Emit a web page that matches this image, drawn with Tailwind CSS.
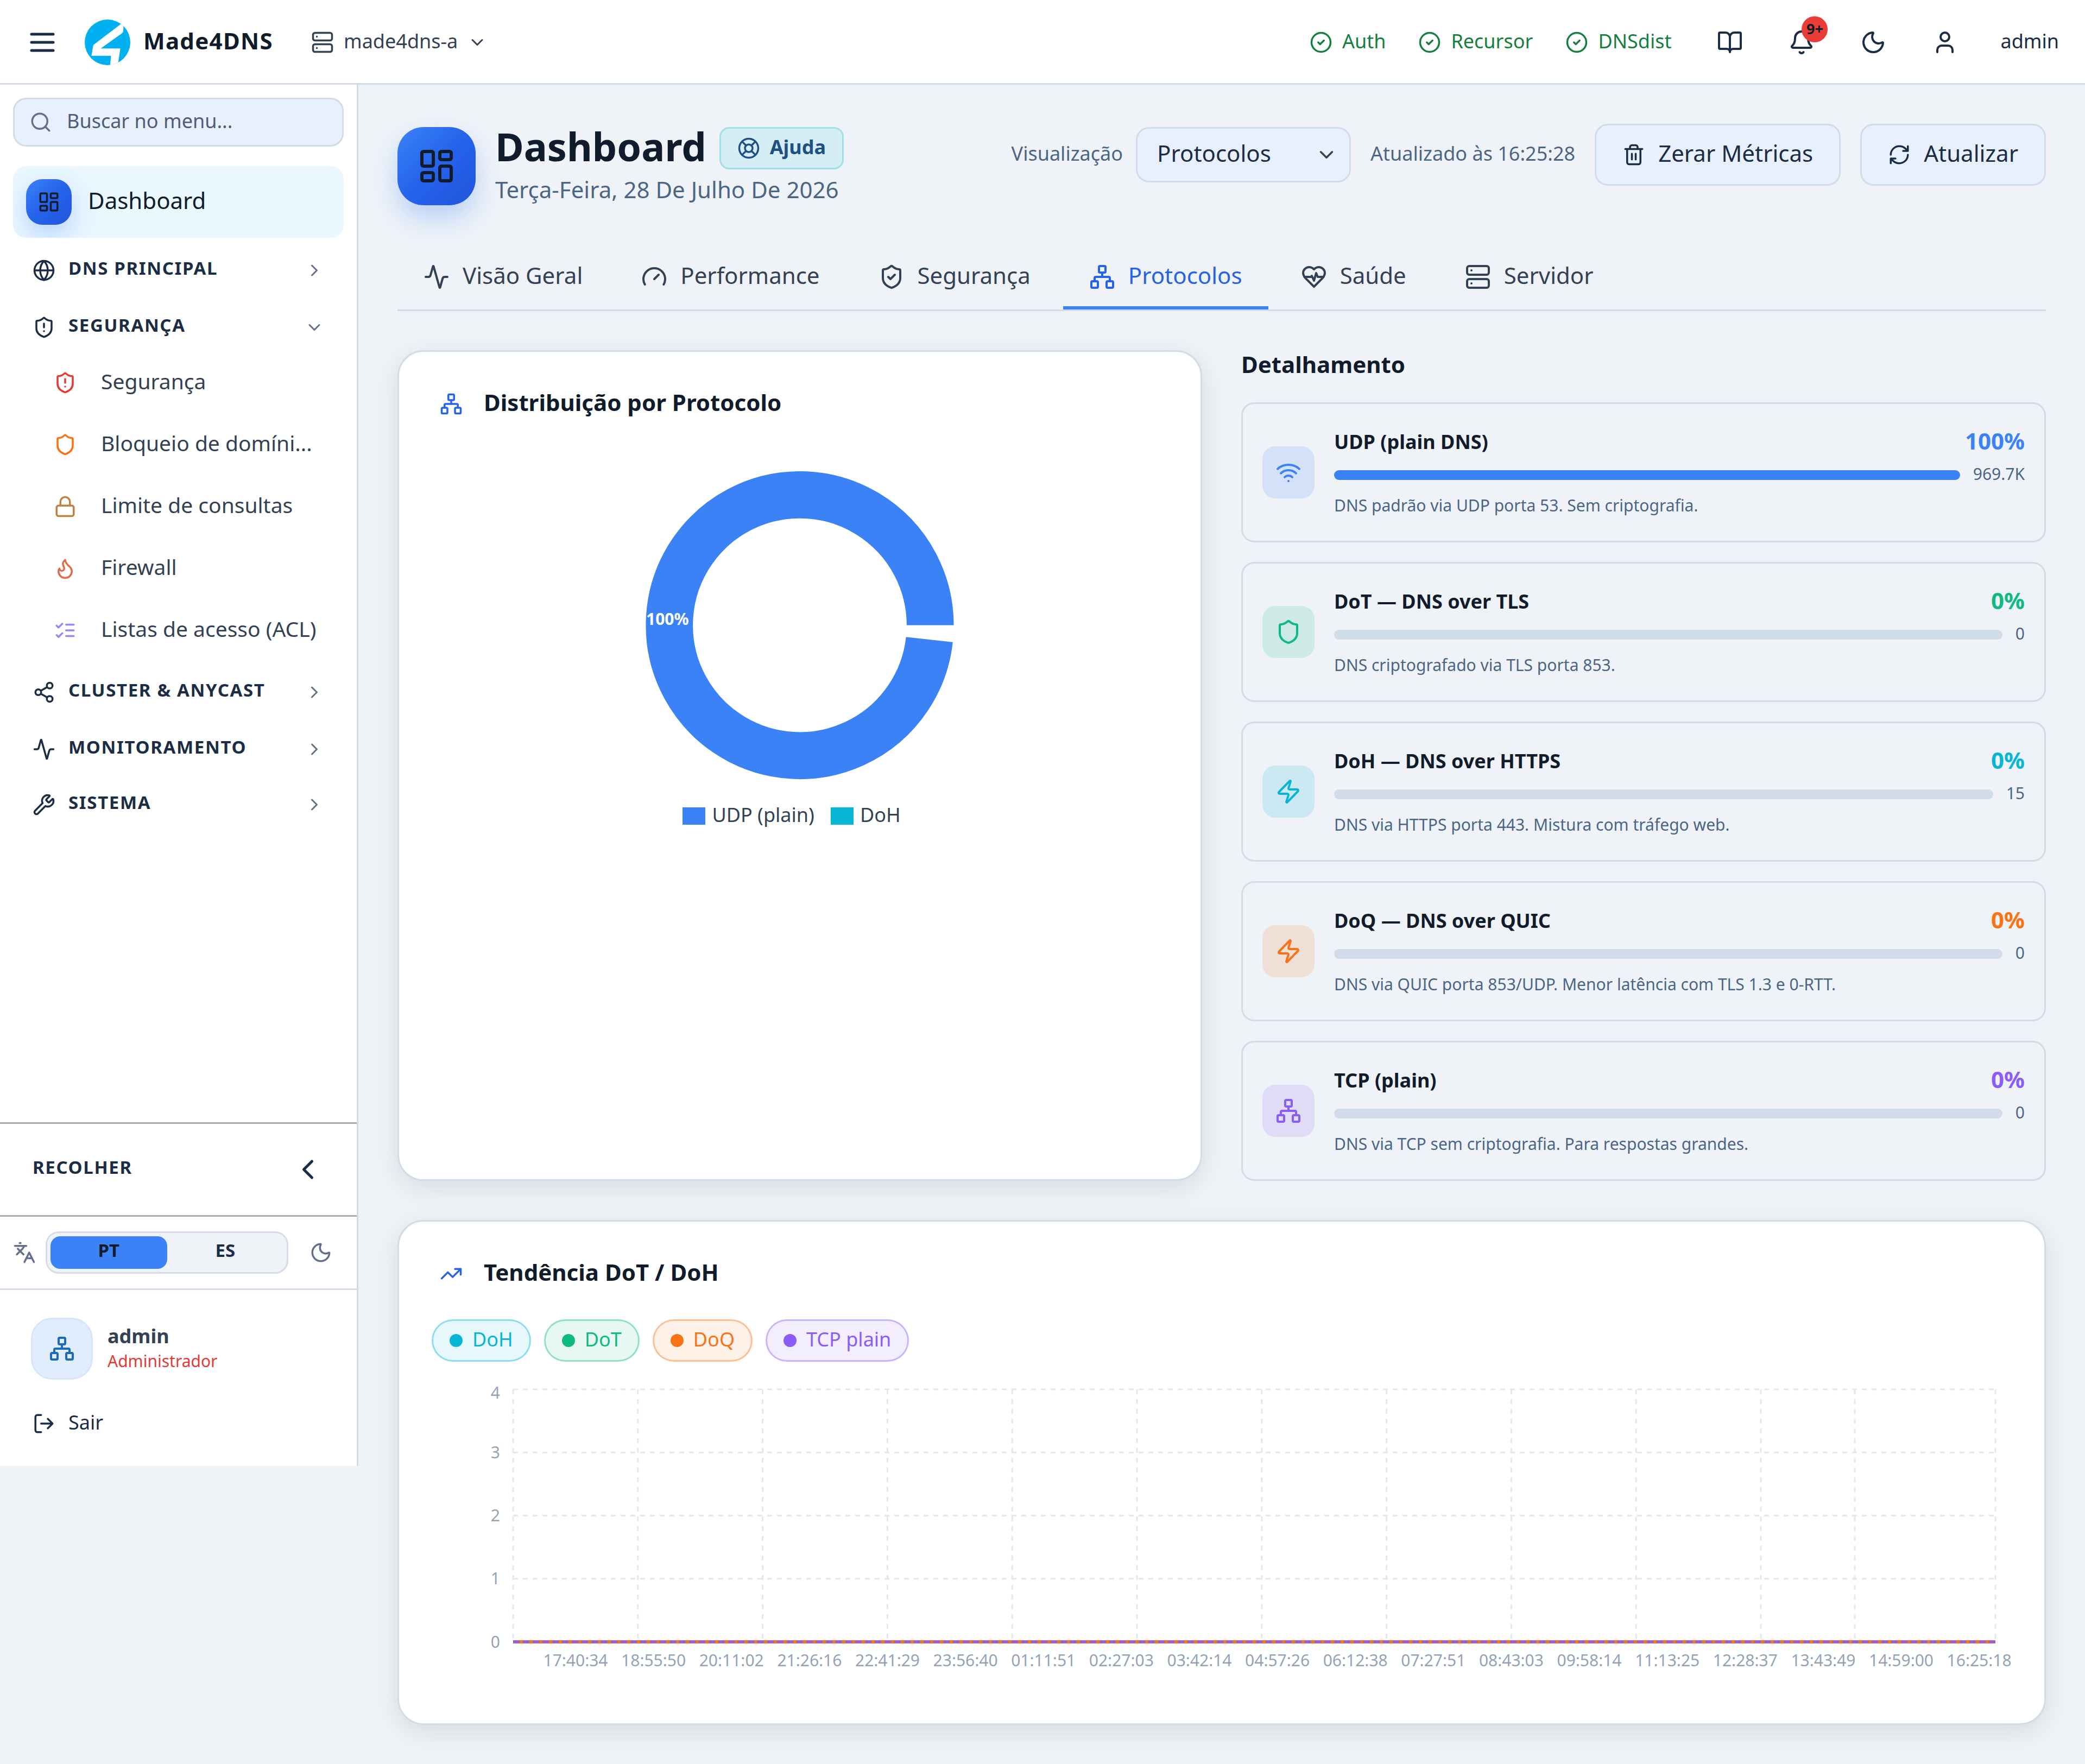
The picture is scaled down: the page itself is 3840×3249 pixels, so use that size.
<!DOCTYPE html>
<html lang="pt-BR">
<head>
<meta charset="utf-8">
<title>Made4DNS - Dashboard</title>
<script src="https://cdn.jsdelivr.net/npm/@tailwindcss/browser@4"></script>
</head>
<body class="bg-[#eff3f8] text-[#1b2d45] font-['Noto_Sans',sans-serif] w-[3840px] min-h-[3249px]">

<svg class="hidden" xmlns="http://www.w3.org/2000/svg">
  <symbol id="menu" viewBox="0 0 24 24"><path d="M4 6h16M4 12h16M4 18h16"/></symbol>
  <symbol id="server" viewBox="0 0 24 24"><rect width="20" height="8" x="2" y="2" rx="2"/><rect width="20" height="8" x="2" y="14" rx="2"/><path d="M6 6h.01M6 18h.01"/></symbol>
  <symbol id="down" viewBox="0 0 24 24"><path d="m6 9 6 6 6-6"/></symbol>
  <symbol id="right" viewBox="0 0 24 24"><path d="m9 18 6-6-6-6"/></symbol>
  <symbol id="left" viewBox="0 0 24 24"><path d="m15 18-6-6 6-6"/></symbol>
  <symbol id="search" viewBox="0 0 24 24"><circle cx="11" cy="11" r="8"/><path d="m21 21-4.3-4.3"/></symbol>
  <symbol id="dash" viewBox="0 0 24 24"><rect width="7" height="9" x="3" y="3" rx="1"/><rect width="7" height="5" x="14" y="3" rx="1"/><rect width="7" height="9" x="14" y="12" rx="1"/><rect width="7" height="5" x="3" y="16" rx="1"/></symbol>
  <symbol id="globe" viewBox="0 0 24 24"><circle cx="12" cy="12" r="10"/><path d="M12 2a14.5 14.5 0 0 0 0 20 14.5 14.5 0 0 0 0-20M2 12h20"/></symbol>
  <symbol id="shield" viewBox="0 0 24 24"><path d="M20 13c0 5-3.5 7.5-7.66 8.95a1 1 0 0 1-.67-.01C7.5 20.5 4 18 4 13V6a1 1 0 0 1 1-1c2 0 4.5-1.2 6.24-2.72a1.17 1.17 0 0 1 1.52 0C14.51 3.81 17 5 19 5a1 1 0 0 1 1 1z"/></symbol>
  <symbol id="shield-alert" viewBox="0 0 24 24"><path d="M20 13c0 5-3.5 7.5-7.66 8.95a1 1 0 0 1-.67-.01C7.5 20.5 4 18 4 13V6a1 1 0 0 1 1-1c2 0 4.5-1.2 6.24-2.72a1.17 1.17 0 0 1 1.52 0C14.51 3.81 17 5 19 5a1 1 0 0 1 1 1z"/><path d="M12 8v4M12 16h.01"/></symbol>
  <symbol id="shield-check" viewBox="0 0 24 24"><path d="M20 13c0 5-3.5 7.5-7.66 8.95a1 1 0 0 1-.67-.01C7.5 20.5 4 18 4 13V6a1 1 0 0 1 1-1c2 0 4.5-1.2 6.24-2.72a1.17 1.17 0 0 1 1.52 0C14.51 3.81 17 5 19 5a1 1 0 0 1 1 1z"/><path d="m9 12 2 2 4-4"/></symbol>
  <symbol id="lock" viewBox="0 0 24 24"><rect width="18" height="11" x="3" y="11" rx="2"/><path d="M7 11V7a5 5 0 0 1 10 0v4"/></symbol>
  <symbol id="flame" viewBox="0 0 24 24"><path d="M8.5 14.5A2.5 2.5 0 0 0 11 12c0-1.38-.5-2-1-3-1.072-2.143-.224-4.054 2-6 .5 2.5 2 4.9 4 6.5 2 1.6 3 3.5 3 5.5a7 7 0 1 1-14 0c0-1.153.433-2.294 1-3a2.5 2.5 0 0 0 2.5 2.5z"/></symbol>
  <symbol id="checks" viewBox="0 0 24 24"><path d="m3 17 2 2 4-4M3 7l2 2 4-4M13 6h8M13 12h8M13 18h8"/></symbol>
  <symbol id="share" viewBox="0 0 24 24"><circle cx="18" cy="5" r="3"/><circle cx="6" cy="12" r="3"/><circle cx="18" cy="19" r="3"/><path d="m8.59 13.51 6.83 3.98M15.41 6.51l-6.82 3.98"/></symbol>
  <symbol id="activity" viewBox="0 0 24 24"><path d="M22 12h-2.48a2 2 0 0 0-1.93 1.46l-2.35 8.36a.25.25 0 0 1-.48 0L9.24 2.18a.25.25 0 0 0-.48 0l-2.35 8.36A2 2 0 0 1 4.49 12H2"/></symbol>
  <symbol id="wrench" viewBox="0 0 24 24"><path d="M14.7 6.3a1 1 0 0 0 0 1.4l1.6 1.6a1 1 0 0 0 1.4 0l3.106-3.105c.32-.322.863-.22.983.218a6 6 0 0 1-8.259 7.057l-7.91 7.91a1 1 0 0 1-2.999-3l7.91-7.91a6 6 0 0 1 7.057-8.259c.438.12.54.662.219.984z"/></symbol>
  <symbol id="languages" viewBox="0 0 24 24"><path d="m5 8 6 6M4 14l6-6 2-3M2 5h12M7 2h1M22 22l-5-10-5 10M14 18h6"/></symbol>
  <symbol id="moon" viewBox="0 0 24 24"><path d="M20.985 12.486a9 9 0 1 1-9.473-9.472c.405-.022.617.46.402.803a6 6 0 0 0 8.268 8.268c.344-.215.825-.004.803.401"/></symbol>
  <symbol id="network" viewBox="0 0 24 24"><rect x="16" y="16" width="6" height="6" rx="1"/><rect x="2" y="16" width="6" height="6" rx="1"/><rect x="9" y="2" width="6" height="6" rx="1"/><path d="M5 16v-3a1 1 0 0 1 1-1h12a1 1 0 0 1 1 1v3M12 12V8"/></symbol>
  <symbol id="logout" viewBox="0 0 24 24"><path d="m16 17 5-5-5-5M21 12H9M9 21H5a2 2 0 0 1-2-2V5a2 2 0 0 1 2-2h4"/></symbol>
  <symbol id="ok" viewBox="0 0 24 24"><circle cx="12" cy="12" r="10"/><path d="m9 12 2 2 4-4"/></symbol>
  <symbol id="book" viewBox="0 0 24 24"><path d="M12 7v14M3 18a1 1 0 0 1-1-1V4a1 1 0 0 1 1-1h5a4 4 0 0 1 4 4 4 4 0 0 1 4-4h5a1 1 0 0 1 1 1v13a1 1 0 0 1-1 1h-6a3 3 0 0 0-3 3 3 3 0 0 0-3-3z"/></symbol>
  <symbol id="bell" viewBox="0 0 24 24"><path d="M10.268 21a2 2 0 0 0 3.464 0M3.262 15.326A1 1 0 0 0 4 17h16a1 1 0 0 0 .74-1.673C19.41 13.956 18 12.499 18 8A6 6 0 0 0 6 8c0 4.499-1.411 5.956-2.738 7.326"/></symbol>
  <symbol id="user" viewBox="0 0 24 24"><path d="M19 21v-2a4 4 0 0 0-4-4H9a4 4 0 0 0-4 4v2"/><circle cx="12" cy="7" r="4"/></symbol>
  <symbol id="buoy" viewBox="0 0 24 24"><circle cx="12" cy="12" r="10"/><path d="m4.93 4.93 4.24 4.24M14.83 9.17l4.24-4.24M14.83 14.83l4.24 4.24M9.17 14.83l-4.24 4.24"/><circle cx="12" cy="12" r="4"/></symbol>
  <symbol id="trash" viewBox="0 0 24 24"><path d="M10 11v6M14 11v6M19 6v14a2 2 0 0 1-2 2H7a2 2 0 0 1-2-2V6M3 6h18M8 6V4a2 2 0 0 1 2-2h4a2 2 0 0 1 2 2v2"/></symbol>
  <symbol id="refresh" viewBox="0 0 24 24"><path d="M3 12a9 9 0 0 1 9-9 9.75 9.75 0 0 1 6.74 2.74L21 8M21 3v5h-5M21 12a9 9 0 0 1-9 9 9.75 9.75 0 0 1-6.74-2.74L3 16M8 16H3v5"/></symbol>
  <symbol id="gauge" viewBox="0 0 24 24"><path d="m12 14 4-4M3.34 19a10 10 0 1 1 17.32 0"/></symbol>
  <symbol id="heart" viewBox="0 0 24 24"><path d="M19 14c1.49-1.46 3-3.21 3-5.5A5.5 5.5 0 0 0 16.5 3c-1.76 0-3 .5-4.5 2-1.5-1.5-2.74-2-4.5-2A5.5 5.5 0 0 0 2 8.5c0 2.3 1.5 4.05 3 5.5l7 7Z"/><path d="M3.22 12H9.5l.5-1 2 4.5 2-7 1.5 3.5h5.27"/></symbol>
  <symbol id="wifi" viewBox="0 0 24 24"><path d="M12 20h.01M2 8.82a15 15 0 0 1 20 0M5 12.859a10 10 0 0 1 14 0M8.5 16.429a5 5 0 0 1 7 0"/></symbol>
  <symbol id="zap" viewBox="0 0 24 24"><path d="M4 14a1 1 0 0 1-.78-1.63l9.9-10.2a.5.5 0 0 1 .86.46l-1.92 6.02A1 1 0 0 0 13 10h7a1 1 0 0 1 .78 1.63l-9.9 10.2a.5.5 0 0 1-.86-.46l1.92-6.02A1 1 0 0 0 11 14z"/></symbol>
  <symbol id="trend" viewBox="0 0 24 24"><path d="M16 7h6v6"/><path d="m22 7-8.5 8.5-5-5L2 17"/></symbol>
</svg>

<header class="flex h-[156px] items-center justify-between border-b-[3px] border-[#d2dce8] bg-white px-12 pt-[3px]">
  <div class="flex items-center">
    <svg class="size-[60px] fill-none stroke-current stroke-2 [stroke-linecap:round]"><use href="#menu"/></svg>
    <svg class="ml-12 size-[84px]" viewBox="0 0 84 84"><clipPath id="disc"><circle cx="42" cy="42" r="42"/></clipPath><circle cx="42" cy="42" r="42" fill="#00b0f0"/><path clip-path="url(#disc)" fill="#fff" d="M67 8 17 46Q15.500 47.500 15.300 50L12.400 66.700H48.500L46.700 86 61 84 65.600 53.300H29.500L69 25Q70.500 24 70.700 22L72 8Z"/></svg>
    <span class="ml-6 w-[309px] pb-2 text-[42px] font-bold tracking-[1.3px] text-[#101c2b]">Made4DNS</span>
    <div class="flex items-center gap-[18px] text-[#334155]">
      <svg class="size-[42px] fill-none stroke-current stroke-2 [stroke-linecap:round]"><use href="#server"/></svg>
      <span class="pb-1 text-[36px]">made4dns-a</span>
      <svg class="size-9 fill-none stroke-current stroke-2 [stroke-linecap:round] [stroke-linejoin:round]"><use href="#down"/></svg>
    </div>
  </div>
  <div class="flex items-center">
    <div class="flex items-center gap-[60px] text-[36px] text-[#15803d]">
      <div class="flex items-center gap-[18px]"><svg class="size-[42px] fill-none stroke-current stroke-2 [stroke-linecap:round] [stroke-linejoin:round]"><use href="#ok"/></svg><span class="pb-1">Auth</span></div>
      <div class="flex items-center gap-[18px]"><svg class="size-[42px] fill-none stroke-current stroke-2 [stroke-linecap:round] [stroke-linejoin:round]"><use href="#ok"/></svg><span class="pb-1">Recursor</span></div>
      <div class="flex items-center gap-[18px]"><svg class="size-[42px] fill-none stroke-current stroke-2 [stroke-linecap:round] [stroke-linejoin:round]"><use href="#ok"/></svg><span class="pb-1">DNSdist</span></div>
    </div>
    <div class="ml-[84px] flex items-center gap-[84px]">
      <svg class="size-12 fill-none stroke-current stroke-2 [stroke-linecap:round] [stroke-linejoin:round]"><use href="#book"/></svg>
      <div class="relative">
        <svg class="size-12 fill-none stroke-current stroke-2 [stroke-linecap:round] [stroke-linejoin:round]"><use href="#bell"/></svg>
        <span class="absolute -top-6 left-6 flex size-12 items-center justify-center rounded-full bg-[#ea3d38] pb-0.5 text-[27px] font-bold text-[#101c2b]">9+</span>
      </div>
      <svg class="size-12 fill-none stroke-current stroke-2 [stroke-linecap:round] [stroke-linejoin:round]"><use href="#moon"/></svg>
      <svg class="size-12 fill-none stroke-current stroke-2 [stroke-linecap:round] [stroke-linejoin:round]"><use href="#user"/></svg>
    </div>
    <span class="ml-[78px] pb-1 text-[36px]">admin</span>
  </div>
</header>

<div class="flex items-start">
  <aside class="flex h-[2544px] w-[660px] shrink-0 flex-col border-r-[3px] border-[#d2dce8] bg-white">
    <nav class="flex flex-1 flex-col px-6 pt-6">
      <div class="flex h-[90px] items-center gap-[27px] rounded-3xl border-[3px] border-[#d2dce8] bg-[#e8f0fd] px-[27px] text-[36px] text-[#4d5d75]">
        <svg class="size-[42px] fill-none stroke-[#64708a] stroke-2 [stroke-linecap:round]"><use href="#search"/></svg>
        <span class="pb-1">Buscar no menu...</span>
      </div>
      <div class="mt-9 flex h-[132px] items-center gap-[30px] overflow-hidden rounded-3xl bg-[#eaf7ff] px-6 text-[42px] text-[#101c2b]">
        <div class="flex size-[84px] items-center justify-center rounded-[30px] bg-linear-135 from-[#3b82f6] via-[#2563eb] to-[#2254dc] shadow-[0_18px_48px_rgba(59,130,246,0.3)]">
          <svg class="size-[42px] fill-none stroke-current stroke-2 [stroke-linejoin:round]"><use href="#dash"/></svg>
        </div>
        <span class="pb-2">Dashboard</span>
      </div>
      <div class="mt-[15px] flex h-[90px] items-center gap-6 px-9 text-[33px] font-bold tracking-[0.05em]">
        <svg class="size-[42px] fill-none stroke-current stroke-2"><use href="#globe"/></svg><span class="flex-1 pb-2">DNS PRINCIPAL</span>
        <svg class="size-9 fill-none stroke-[#64708a] stroke-2 [stroke-linecap:round] [stroke-linejoin:round]"><use href="#right"/></svg>
      </div>
      <div class="mt-[15px] flex h-[90px] items-center gap-6 px-9 text-[33px] font-bold tracking-[0.05em]">
        <svg class="size-[42px] fill-none stroke-current stroke-2 [stroke-linecap:round] [stroke-linejoin:round]"><use href="#shield-alert"/></svg><span class="flex-1 pb-2">SEGURANÇA</span>
        <svg class="size-9 fill-none stroke-[#64708a] stroke-2 [stroke-linecap:round] [stroke-linejoin:round]"><use href="#down"/></svg>
      </div>
      <div class="flex flex-col pl-[75px] text-[39px] text-[#334155]">
        <div class="flex h-[114px] items-center gap-[45px]"><svg class="size-[42px] shrink-0 fill-none stroke-[#e53935] stroke-2 [stroke-linecap:round] [stroke-linejoin:round]"><use href="#shield-alert"/></svg><span class="pb-1.5">Segurança</span></div>
        <div class="flex h-[114px] items-center gap-[45px]"><svg class="size-[42px] shrink-0 fill-none stroke-[#f97316] stroke-2 [stroke-linecap:round] [stroke-linejoin:round]"><use href="#shield"/></svg><span class="pb-1.5">Bloqueio de domíni...</span></div>
        <div class="flex h-[114px] items-center gap-[45px]"><svg class="size-[42px] shrink-0 fill-none stroke-[#c08040] stroke-2 [stroke-linecap:round] [stroke-linejoin:round]"><use href="#lock"/></svg><span class="pb-1.5">Limite de consultas</span></div>
        <div class="flex h-[114px] items-center gap-[45px]"><svg class="size-[42px] shrink-0 fill-none stroke-[#e06c4c] stroke-2 [stroke-linecap:round] [stroke-linejoin:round]"><use href="#flame"/></svg><span class="pb-1.5">Firewall</span></div>
        <div class="flex h-[114px] items-center gap-[45px]"><svg class="size-[42px] shrink-0 fill-none stroke-[#8f8bf8] stroke-2 [stroke-linecap:round] [stroke-linejoin:round]"><use href="#checks"/></svg><span class="pb-1.5 whitespace-nowrap">Listas de acesso (ACL)</span></div>
      </div>
      <div class="mt-3 flex h-[90px] items-center gap-6 px-9 text-[33px] font-bold tracking-[0.05em]">
        <svg class="size-[42px] fill-none stroke-current stroke-2"><use href="#share"/></svg><span class="flex-1 pb-2">CLUSTER &amp; ANYCAST</span>
        <svg class="size-9 fill-none stroke-[#64708a] stroke-2 [stroke-linecap:round] [stroke-linejoin:round]"><use href="#right"/></svg>
      </div>
      <div class="mt-[15px] flex h-[90px] items-center gap-6 px-9 text-[33px] font-bold tracking-[0.05em]">
        <svg class="size-[42px] fill-none stroke-current stroke-2 [stroke-linecap:round] [stroke-linejoin:round]"><use href="#activity"/></svg><span class="flex-1 pb-2">MONITORAMENTO</span>
        <svg class="size-9 fill-none stroke-[#64708a] stroke-2 [stroke-linecap:round] [stroke-linejoin:round]"><use href="#right"/></svg>
      </div>
      <div class="mt-3 flex h-[90px] items-center gap-6 px-9 text-[33px] font-bold tracking-[0.05em]">
        <svg class="size-[42px] fill-none stroke-current stroke-2 [stroke-linecap:round] [stroke-linejoin:round]"><use href="#wrench"/></svg><span class="flex-1 pb-2">SISTEMA</span>
        <svg class="size-9 fill-none stroke-[#64708a] stroke-2 [stroke-linecap:round] [stroke-linejoin:round]"><use href="#right"/></svg>
      </div>
    </nav>
    <div class="flex h-[171px] items-center justify-between border-t-[3px] border-[#a6abb5] pr-[60px] pl-[60px] text-[33px] font-bold tracking-[0.05em]">
      <span class="pb-2">RECOLHER</span>
      <svg class="size-[60px] fill-none stroke-current stroke-2 [stroke-linecap:round] [stroke-linejoin:round]"><use href="#left"/></svg>
    </div>
    <div class="flex h-[135px] items-center border-t-[3px] border-[#a6abb5] pl-6">
      <svg class="size-[42px] fill-none stroke-[#64708a] stroke-2 [stroke-linecap:round] [stroke-linejoin:round]"><use href="#languages"/></svg>
      <div class="ml-[18px] flex h-[78px] w-[447px] rounded-3xl border-[3px] border-[#d6dde8] bg-[#eff3f8] p-1.5 text-[33px] font-bold">
        <span class="flex flex-1 items-center justify-center rounded-[18px] bg-[#3b82f6] pb-2 text-[#101c2b]">PT</span>
        <span class="flex flex-1 items-center justify-center pb-2">ES</span>
      </div>
      <svg class="ml-[39px] size-[42px] fill-none stroke-[#64708a] stroke-2 [stroke-linecap:round] [stroke-linejoin:round]"><use href="#moon"/></svg>
    </div>
    <div class="h-[327px] border-t-[3px] border-[#d2dce8] pt-[51px] pl-[57px]">
      <div class="flex h-[114px] items-center gap-[27px]">
        <div class="flex size-[114px] items-center justify-center rounded-[39px] border-[3px] border-[#d5e5fa] bg-[#e1ecfd]">
          <svg class="size-12 fill-none stroke-[#1d6ab8] stroke-2 [stroke-linecap:round] [stroke-linejoin:round]"><use href="#network"/></svg>
        </div>
        <div class="flex flex-col">
          <span class="text-[36px] leading-[46px] font-bold text-[#334155]">admin</span>
          <span class="text-[30px] leading-[46px] text-[#e53935]">Administrador</span>
        </div>
      </div>
      <div class="mt-[51px] ml-[3px] flex h-[60px] items-center gap-6 text-[36px]">
        <svg class="size-[42px] fill-none stroke-current stroke-2 [stroke-linecap:round] [stroke-linejoin:round]"><use href="#logout"/></svg>
        <span class="pb-1">Sair</span>
      </div>
    </div>
  </aside>

  <main class="flex-1 px-[72px] pt-[72px]">
    <div class="flex h-[222px] items-start justify-between">
      <div class="flex gap-9">
        <div class="mt-1.5 flex size-36 items-center justify-center rounded-[48px] bg-linear-135 from-[#3b82f6] via-[#2563eb] to-[#2254dc] text-[#101c2b] shadow-[0_24px_48px_rgba(59,130,246,0.3)]">
          <svg class="size-[72px] fill-none stroke-current stroke-2 [stroke-linejoin:round]"><use href="#dash"/></svg>
        </div>
        <div>
          <div class="flex h-[90px] items-center gap-6">
            <h1 class="pb-2 text-[72px] font-bold text-[#101c2b]">Dashboard</h1>
            <div class="flex h-[78px] items-center gap-[18px] rounded-[18px] border-[3px] border-[#9fe0ea] bg-[#d5edf5] px-[30px] text-[36px] font-bold text-[#1f5083]">
              <svg class="size-[42px] fill-none stroke-current stroke-2"><use href="#buoy"/></svg><span class="pb-1">Ajuda</span>
            </div>
          </div>
          <p class="text-[42px] leading-[62px] text-[#4b6585]">Terça-Feira, 28 De Julho De 2026</p>
        </div>
      </div>
      <div class="flex h-[114px] items-center text-[36px] text-[#4b6585]">
        <span class="pb-1">Visualização</span>
        <div class="ml-6 flex h-[102px] w-[396px] items-center justify-between rounded-3xl border-[3px] border-[#d2dce8] bg-[#e8f0fd] pr-[21px] pl-9 text-[42px] text-[#1b2d45]">
          <span class="pb-2">Protocolos</span>
          <svg class="size-[42px] fill-none stroke-[#334155] stroke-2 [stroke-linecap:round] [stroke-linejoin:round]"><use href="#down"/></svg>
        </div>
        <span class="ml-9 pb-1">Atualizado às 16:25:28</span>
        <div class="ml-9 flex h-[114px] items-center gap-6 rounded-3xl border-[3px] border-[#d2dce8] bg-[#e8f0fd] px-12 text-[42px] text-[#1b2d45]">
          <svg class="size-[42px] fill-none stroke-current stroke-2 [stroke-linecap:round] [stroke-linejoin:round]"><use href="#trash"/></svg><span class="pb-2">Zerar Métricas</span>
        </div>
        <div class="ml-9 flex h-[114px] items-center gap-6 rounded-3xl border-[3px] border-[#d2dce8] bg-[#e8f0fd] px-12 text-[42px] text-[#1b2d45]">
          <svg class="size-[42px] fill-none stroke-current stroke-2 [stroke-linecap:round] [stroke-linejoin:round]"><use href="#refresh"/></svg><span class="pb-2">Atualizar</span>
        </div>
      </div>
    </div>

    <div class="flex h-[123px] gap-3 border-b-[3px] border-[#d2dce8] text-[42px] text-[#334155]">
      <div class="flex items-center gap-6 px-12"><svg class="size-12 fill-none stroke-current stroke-2 [stroke-linecap:round] [stroke-linejoin:round]"><use href="#activity"/></svg><span class="pb-2">Visão Geral</span></div>
      <div class="flex items-center gap-6 px-12"><svg class="size-12 fill-none stroke-current stroke-2 [stroke-linecap:round] [stroke-linejoin:round]"><use href="#gauge"/></svg><span class="pb-2">Performance</span></div>
      <div class="flex items-center gap-6 px-12"><svg class="size-12 fill-none stroke-current stroke-2 [stroke-linecap:round] [stroke-linejoin:round]"><use href="#shield-check"/></svg><span class="pb-2">Segurança</span></div>
      <div class="flex items-center gap-6 border-y-[6px] border-t-transparent border-b-[#3b82f6] px-12 text-[#2563eb]"><svg class="size-12 fill-none stroke-current stroke-2 [stroke-linecap:round] [stroke-linejoin:round]"><use href="#network"/></svg><span class="pb-2">Protocolos</span></div>
      <div class="flex items-center gap-6 px-12"><svg class="size-12 fill-none stroke-current stroke-2 [stroke-linecap:round] [stroke-linejoin:round]"><use href="#heart"/></svg><span class="pb-2">Saúde</span></div>
      <div class="flex items-center gap-6 px-12"><svg class="size-12 fill-none stroke-current stroke-2 [stroke-linecap:round] [stroke-linejoin:round]"><use href="#server"/></svg><span class="pb-2">Servidor</span></div>
    </div>

    <div class="mt-[72px] grid grid-cols-2 gap-[72px]">
      <section class="flex h-[1530px] flex-col rounded-[48px] border-[3px] border-[#d2dce8] bg-white pt-[60px] shadow-[0_12px_48px_rgba(0,0,0,0.1),inset_0_3px_0_#f8fcff]">
        <div class="flex h-[72px] items-center gap-[39px] pl-[75px]">
          <svg class="size-[42px] fill-none stroke-[#2563eb] stroke-2 [stroke-linecap:round] [stroke-linejoin:round]"><use href="#network"/></svg>
          <h2 class="pb-2 text-[42px] font-bold text-[#101c2b]">Distribuição por Protocolo</h2>
        </div>
        <svg class="h-[680px] w-full" viewBox="0 0 1476 680">
          <path d="M978.200 371.500A240.200 240.200 0 1 0 976.750 397.900" fill="none" stroke="#3b82f6" stroke-width="86.700"/>
          <text x="455" y="371" class="fill-white text-[30px] font-bold">100%</text>
        </svg>
        <div class="flex h-[86px] items-center justify-center text-[36px] text-[#334155]">
          <div class="mr-[30px] flex items-center gap-3"><span class="h-8 w-[42px] bg-[#3b82f6]"></span><span class="pb-1">UDP (plain)</span></div>
          <div class="mr-[30px] flex items-center gap-3"><span class="h-8 w-[42px] bg-[#06b6d4]"></span><span class="pb-1">DoH</span></div>
        </div>
      </section>

      <section class="flex flex-col">
        <h2 class="h-[96px] text-[42px] leading-[52px] font-bold text-[#101c2b]">Detalhamento</h2>
        <div class="flex flex-col gap-9">
          <div class="flex h-[258px] items-center gap-9 rounded-3xl border-[3px] border-[#d2dce8] px-9">
            <div class="flex size-24 items-center justify-center rounded-3xl bg-[#3b82f6]/15"><svg class="size-12 fill-none stroke-[#3b82f6] stroke-2 [stroke-linecap:round]"><use href="#wifi"/></svg></div>
            <div class="flex-1 pt-px">
              <div class="flex h-[66px] items-center justify-between"><span class="text-[36px] font-bold text-[#101c2b]">UDP (plain DNS)</span><span class="pb-1 text-[42px] font-bold text-[#3b82f6]">100%</span></div>
              <div class="flex h-[54px] items-center gap-6 pt-0.5"><div class="h-[18px] flex-1 rounded-full bg-[#3b82f6]"></div><span class="pb-1 text-[30px] text-[#4b6585]">969.7K</span></div>
              <p class="h-[60px] text-[30px] leading-[60px] text-[#4b6585]">DNS padrão via UDP porta 53. Sem criptografia.</p>
            </div>
          </div>
          <div class="flex h-[258px] items-center gap-9 rounded-3xl border-[3px] border-[#d2dce8] px-9">
            <div class="flex size-24 items-center justify-center rounded-3xl bg-[#10b981]/15"><svg class="size-12 fill-none stroke-[#10b981] stroke-2 [stroke-linecap:round] [stroke-linejoin:round]"><use href="#shield"/></svg></div>
            <div class="flex-1 pt-px">
              <div class="flex h-[66px] items-center justify-between"><span class="text-[36px] font-bold text-[#101c2b]">DoT — DNS over TLS</span><span class="pb-1 text-[42px] font-bold text-[#10b981]">0%</span></div>
              <div class="flex h-[54px] items-center gap-6 pt-0.5"><div class="h-[18px] flex-1 rounded-full bg-[#d2dce8]"></div><span class="pb-1 text-[30px] text-[#4b6585]">0</span></div>
              <p class="h-[60px] text-[30px] leading-[60px] text-[#4b6585]">DNS criptografado via TLS porta 853.</p>
            </div>
          </div>
          <div class="flex h-[258px] items-center gap-9 rounded-3xl border-[3px] border-[#d2dce8] px-9">
            <div class="flex size-24 items-center justify-center rounded-3xl bg-[#06b6d4]/15"><svg class="size-12 fill-none stroke-[#06b6d4] stroke-2 [stroke-linecap:round] [stroke-linejoin:round]"><use href="#zap"/></svg></div>
            <div class="flex-1 pt-px">
              <div class="flex h-[66px] items-center justify-between"><span class="text-[36px] font-bold text-[#101c2b]">DoH — DNS over HTTPS</span><span class="pb-1 text-[42px] font-bold text-[#06b6d4]">0%</span></div>
              <div class="flex h-[54px] items-center gap-6 pt-0.5"><div class="h-[18px] flex-1 rounded-full bg-[#d2dce8]"></div><span class="pb-1 text-[30px] text-[#4b6585]">15</span></div>
              <p class="h-[60px] text-[30px] leading-[60px] text-[#4b6585]">DNS via HTTPS porta 443. Mistura com tráfego web.</p>
            </div>
          </div>
          <div class="flex h-[258px] items-center gap-9 rounded-3xl border-[3px] border-[#d2dce8] px-9">
            <div class="flex size-24 items-center justify-center rounded-3xl bg-[#f97316]/15"><svg class="size-12 fill-none stroke-[#f97316] stroke-2 [stroke-linecap:round] [stroke-linejoin:round]"><use href="#zap"/></svg></div>
            <div class="flex-1 pt-px">
              <div class="flex h-[66px] items-center justify-between"><span class="text-[36px] font-bold text-[#101c2b]">DoQ — DNS over QUIC</span><span class="pb-1 text-[42px] font-bold text-[#f97316]">0%</span></div>
              <div class="flex h-[54px] items-center gap-6 pt-0.5"><div class="h-[18px] flex-1 rounded-full bg-[#d2dce8]"></div><span class="pb-1 text-[30px] text-[#4b6585]">0</span></div>
              <p class="h-[60px] text-[30px] leading-[60px] text-[#4b6585]">DNS via QUIC porta 853/UDP. Menor latência com TLS 1.3 e 0-RTT.</p>
            </div>
          </div>
          <div class="flex h-[258px] items-center gap-9 rounded-3xl border-[3px] border-[#d2dce8] px-9">
            <div class="flex size-24 items-center justify-center rounded-3xl bg-[#8b5cf6]/15"><svg class="size-12 fill-none stroke-[#8b5cf6] stroke-2 [stroke-linecap:round] [stroke-linejoin:round]"><use href="#network"/></svg></div>
            <div class="flex-1 pt-px">
              <div class="flex h-[66px] items-center justify-between"><span class="text-[36px] font-bold text-[#101c2b]">TCP (plain)</span><span class="pb-1 text-[42px] font-bold text-[#8b5cf6]">0%</span></div>
              <div class="flex h-[54px] items-center gap-6 pt-0.5"><div class="h-[18px] flex-1 rounded-full bg-[#d2dce8]"></div><span class="pb-1 text-[30px] text-[#4b6585]">0</span></div>
              <p class="h-[60px] text-[30px] leading-[60px] text-[#4b6585]">DNS via TCP sem criptografia. Para respostas grandes.</p>
            </div>
          </div>
        </div>
      </section>
    </div>

    <section class="mt-[72px] h-[930px] rounded-[48px] border-[3px] border-[#d2dce8] bg-white pt-[60px] shadow-[0_12px_48px_rgba(0,0,0,0.1),inset_0_3px_0_#f8fcff]">
      <div class="flex h-[72px] items-center gap-[39px] pl-[75px]">
        <svg class="size-[42px] fill-none stroke-[#2563eb] stroke-2 [stroke-linecap:round] [stroke-linejoin:round]"><use href="#trend"/></svg>
        <h2 class="pb-2 text-[42px] font-bold text-[#101c2b]">Tendência DoT / DoH</h2>
      </div>
      <div class="mt-12 flex gap-6 pl-[60px] text-[36px]">
        <div class="flex h-[78px] items-center gap-[18px] rounded-full border-[3px] border-[#06b6d4]/40 bg-[#06b6d4]/10 px-[30px] text-[#06b6d4]"><span class="size-6 rounded-full bg-[#06b6d4]"></span><span class="pb-1">DoH</span></div>
        <div class="flex h-[78px] items-center gap-[18px] rounded-full border-[3px] border-[#10b981]/40 bg-[#10b981]/10 px-[30px] text-[#10b981]"><span class="size-6 rounded-full bg-[#10b981]"></span><span class="pb-1">DoT</span></div>
        <div class="flex h-[78px] items-center gap-[18px] rounded-full border-[3px] border-[#f97316]/40 bg-[#f97316]/10 px-[30px] text-[#f97316]"><span class="size-6 rounded-full bg-[#f97316]"></span><span class="pb-1">DoQ</span></div>
        <div class="flex h-[78px] items-center gap-[18px] rounded-full border-[3px] border-[#8b5cf6]/40 bg-[#8b5cf6]/10 px-[30px] text-[#8b5cf6]"><span class="size-6 rounded-full bg-[#8b5cf6]"></span><span class="pb-1">TCP plain</span></div>
      </div>
      <svg class="h-[666px] w-[3030px]" viewBox="0 0 3030 666">
        <g fill="none" stroke="#e2e8f0" stroke-width="3" stroke-dasharray="9 9">
          <path d="M210 51H2940M210 167.250H2940M210 283.500H2940M210 399.750H2940M210 516H2940"/>
          <path d="M210 51V516M439.800 51V516M669.600 51V516M899.400 51V516M1129.200 51V516M1359 51V516M1588.800 51V516M1818.600 51V516M2048.400 51V516M2278.200 51V516M2508 51V516M2681 51V516M2940 51V516"/>
        </g>
        <path d="M210 516H2940" fill="none" stroke="#f97316" stroke-width="6"/>
        <path d="M210 516H2940" fill="none" stroke="#8b5cf6" stroke-width="4.500" stroke-dasharray="12 6"/>
        <g class="fill-[#94a3b8] text-[30px]" text-anchor="end">
          <text x="186" y="68">4</text><text x="186" y="178">3</text><text x="186" y="294">2</text><text x="186" y="410">1</text><text x="186" y="527">0</text>
        </g>
        <g class="fill-[#94a3b8] text-[30px]" text-anchor="middle">
          <text x="325" y="561">17:40:34</text><text x="468.600" y="561">18:55:50</text><text x="612.200" y="561">20:11:02</text><text x="755.900" y="561">21:26:16</text><text x="899.500" y="561">22:41:29</text><text x="1043.100" y="561">23:56:40</text><text x="1186.700" y="561">01:11:51</text><text x="1330.300" y="561">02:27:03</text><text x="1474" y="561">03:42:14</text><text x="1617.600" y="561">04:57:26</text><text x="1761.200" y="561">06:12:38</text><text x="1904.800" y="561">07:27:51</text><text x="2048.400" y="561">08:43:03</text><text x="2192" y="561">09:58:14</text><text x="2335.700" y="561">11:13:25</text><text x="2479.300" y="561">12:28:37</text><text x="2622.900" y="561">13:43:49</text><text x="2766.500" y="561">14:59:00</text><text x="2910.100" y="561">16:25:18</text>
        </g>
      </svg>
    </section>
  </main>
</div>
</body>
</html>
